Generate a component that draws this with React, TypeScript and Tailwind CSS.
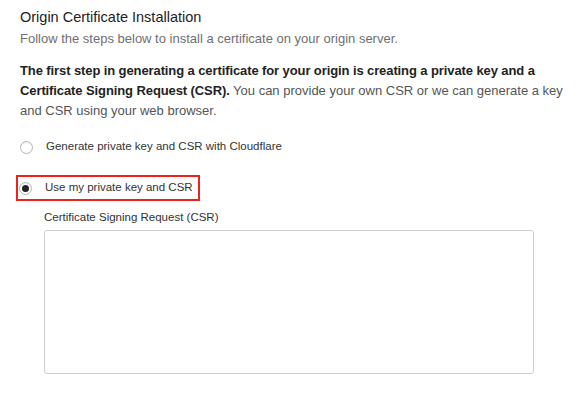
import { useState } from "react";

const options = [
  { id: "cloudflare", label: "Generate private key and CSR with Cloudflare" },
  { id: "own", label: "Use my private key and CSR" },
];

const Radio = ({ checked }: { checked: boolean }) => (
  <span className="flex h-[13px] w-[13px] shrink-0 items-center justify-center rounded-full border border-[#b5b5b5] bg-white shadow-[inset_0_1px_1px_rgba(0,0,0,0.08)]">
    {checked && <span className="h-[7px] w-[7px] rounded-full bg-[#222]" />}
  </span>
);

export default function App() {
  const [choice, setChoice] = useState("own");

  return (
    <div className="min-h-[404px] w-[588px] bg-white pl-5 pr-[16px] pt-[6px] text-[#333] [font-family:'Liberation_Sans',Arial,sans-serif]">
      <h1 className="text-[14.5px] leading-[22px] text-[#222]">Origin Certificate Installation</h1>
      <p className="mt-[1px] text-[13px] leading-[20px] text-[#6f6f6f]">
        Follow the steps below to install a certificate on your origin server.
      </p>

      <p className="mt-[12px] text-[13px] leading-[20px] text-[#555]">
        <span className="font-bold tracking-[-0.1px] text-[#222]">
          The first step in generating a certificate for your origin is creating a private key and a Certificate
          Signing Request (CSR).
        </span>{" "}
        You can provide your own CSR or we can generate a key and CSR using your web browser.
      </p>

      <div className="mt-[13px] flex flex-col gap-[15px]">
        {options.map((o) => {
          const checked = choice === o.id;
          return (
            <button
              key={o.id}
              onClick={() => setChoice(o.id)}
              className={`flex h-[26px] w-fit items-center gap-[13px] pr-[5px] text-left text-[11.5px] text-[#333] ${
                checked ? "-ml-1 border-2 border-[#f0201a] pl-[1px]" : "pl-0"
              }`}
            >
              <Radio checked={checked} />
              <span>{o.label}</span>
            </button>
          );
        })}
      </div>

      <div className="ml-6 mt-[8px]">
        <label className="block text-[11.5px] leading-[16px] text-[#333]">Certificate Signing Request (CSR)</label>
        <textarea className="mt-[5px] block h-[144px] w-[490px] resize-none rounded-[3px] border border-[#cfcfcf] outline-none" />
      </div>
    </div>
  );
}
